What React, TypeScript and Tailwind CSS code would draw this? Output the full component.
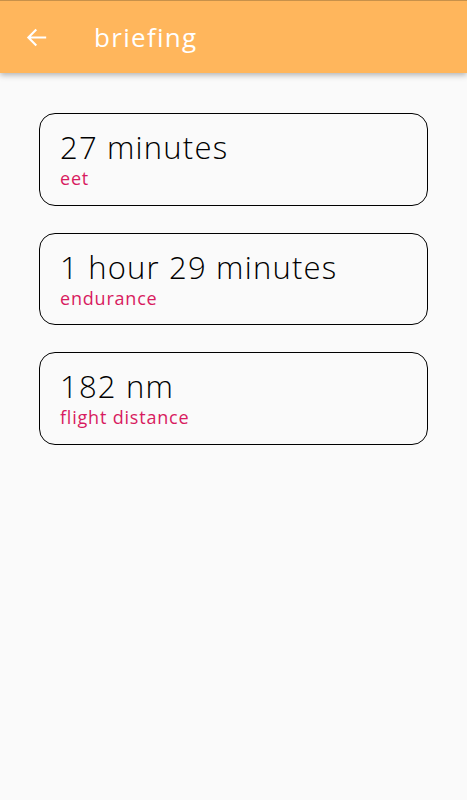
const items = [
  { value: "27 minutes", label: "eet" },
  { value: "1 hour 29 minutes", label: "endurance" },
  { value: "182 nm", label: "flight distance" },
];

export default function App() {
  return (
    <div className="min-h-screen bg-[#fafafa] font-['Open_Sans',sans-serif]">
      {/* App bar */}
      <header className="h-[73px] bg-[#ffb65c] border-t border-[#c8914a] shadow-[0_2px_6px_rgba(0,0,0,0.3)] flex items-center">
        <button className="w-[73px] h-full flex items-center justify-center text-white">
          <svg width="23" height="23" viewBox="0 0 24 24" fill="none" stroke="currentColor" strokeWidth="2.2" strokeLinecap="square">
            <path d="M21 12H4M11 4.5L3.5 12 11 19.5" />
          </svg>
        </button>
        <h1 className="ml-[21px] text-white text-[26px] font-normal tracking-[1.3px]">briefing</h1>
      </header>

      <main className="pt-[40px] px-[39px] flex flex-col gap-[27px]">
        {items.map((it) => (
          <div key={it.label} className="h-[92.5px] rounded-[16px] border-[1.5px] border-black px-[20px] pt-[13px]">
            <div className="text-[31px] leading-[40px] font-light tracking-[1.2px] text-black">{it.value}</div>
            <div className="text-[18px] leading-[22px] tracking-[0.8px] text-[#d81b60]">{it.label}</div>
          </div>
        ))}
      </main>
    </div>
  );
}
